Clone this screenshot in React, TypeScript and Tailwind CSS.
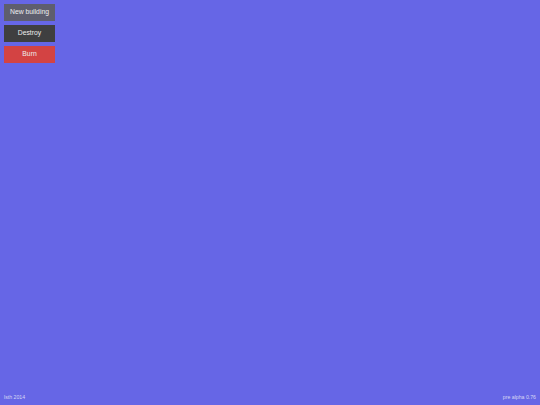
export default function App() {
  return (
    <div className="w-[540px] h-[405px] bg-[#6666e6] flex flex-col justify-between p-[4px] text-white" style={{ fontFamily: '"Liberation Sans", Arial, sans-serif' }}>
      <div className="flex flex-col gap-[4px] w-[51px]">
        <button className="h-[17px] bg-[#5e5e6e] text-[6.8px] leading-none text-[#eeeeee] flex items-center justify-center">New building</button>
        <button className="h-[17px] bg-[#3f3f40] text-[6.8px] leading-none text-[#eeeeee] flex items-center justify-center">Destroy</button>
        <button className="h-[17px] bg-[#d34343] text-[6.8px] leading-none text-[#eeeeee] flex items-center justify-center">Burn</button>
      </div>
      <div className="flex justify-between text-[5.2px] leading-none text-[#d6d6f4] pb-[1px]">
        <span>lsth 2014</span>
        <span>pre alpha 0.76</span>
      </div>
    </div>
  );
}
